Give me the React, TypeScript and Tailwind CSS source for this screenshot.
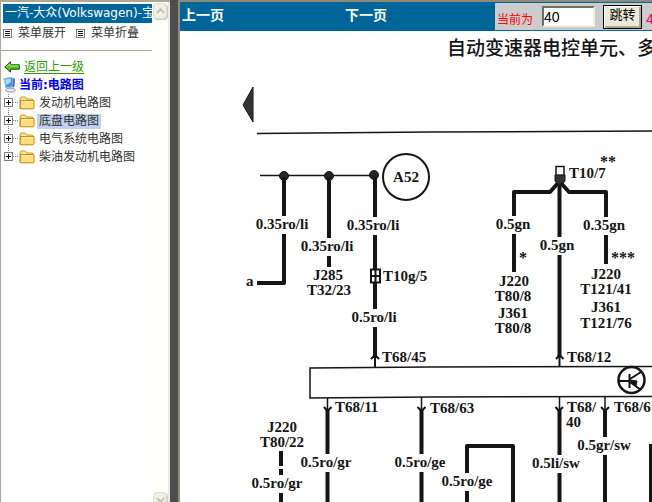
import { useState } from "react";

const UI_FONT = "font-['DejaVu_Sans','Noto_Sans_CJK_SC',sans-serif]";
const CJK_FONT = "font-['Liberation_Sans','Noto_Sans_CJK_SC',sans-serif]";

const FOLDERS = ["发动机电路图", "底盘电路图", "电气系统电路图", "柴油发动机电路图"];

interface WireLabel {
  x: number;
  y: number;
  text: string;
  width: number;
}

// labels that sit on a wire and interrupt it
const WIRE_LABELS: WireLabel[] = [
  { x: 282, y: 229, text: "0.35ro/li", width: 55 },
  { x: 327, y: 251, text: "0.35ro/li", width: 55 },
  { x: 373, y: 230, text: "0.35ro/li", width: 55 },
  { x: 374, y: 322, text: "0.5ro/li", width: 49 },
  { x: 513, y: 229, text: "0.5gn", width: 36 },
  { x: 557, y: 250, text: "0.5gn", width: 36 },
  { x: 604, y: 230, text: "0.35gn", width: 44 },
  { x: 326, y: 467, text: "0.5ro/gr", width: 54 },
  { x: 277, y: 488, text: "0.5ro/gr", width: 54 },
  { x: 420, y: 467, text: "0.5ro/ge", width: 54 },
  { x: 467, y: 486, text: "0.5ro/ge", width: 54 },
  { x: 556, y: 468, text: "0.5li/sw", width: 50 },
  { x: 604, y: 450, text: "0.5gr/sw", width: 56 },
];

const CENTERED_LABELS = [
  { x: 406, y: 182, text: "A52" },
  { x: 328, y: 280, text: "J285" },
  { x: 329, y: 295, text: "T32/23" },
  { x: 514, y: 286, text: "J220" },
  { x: 513, y: 301, text: "T80/8" },
  { x: 513, y: 318, text: "J361" },
  { x: 513, y: 333, text: "T80/8" },
  { x: 606, y: 279, text: "J220" },
  { x: 606, y: 294, text: "T121/41" },
  { x: 606, y: 312, text: "J361" },
  { x: 606, y: 328, text: "T121/76" },
  { x: 282, y: 432, text: "J220" },
  { x: 282, y: 447, text: "T80/22" },
];

const PIN_LABELS = [
  { x: 246, y: 286, text: "a" },
  { x: 383, y: 281, text: "T10g/5" },
  { x: 382, y: 362, text: "T68/45" },
  { x: 569, y: 178, text: "T10/7" },
  { x: 567, y: 362, text: "T68/12" },
  { x: 335, y: 412, text: "T68/11" },
  { x: 430, y: 413, text: "T68/63" },
  { x: 567, y: 412, text: "T68/" },
  { x: 566, y: 427, text: "40" },
  { x: 614, y: 412, text: "T68/6" },
];

function MenuGlyph() {
  return (
    <svg className="size-[9px] shrink-0" viewBox="0 0 9 9" shapeRendering="crispEdges">
      <path d="M.5 .5h8v8h-8z" fill="#fff" stroke="#777" />
      <path d="M2 2.5h5M2 4.5h5M2 6.5h5" stroke="#111" />
    </svg>
  );
}

function BackIcon() {
  return (
    <svg className="h-3 w-4 shrink-0" viewBox="0 0 16 12">
      <path d="M.8 6 6.5 .8v3h8.800v4.400H6.500v3z" fill="#55c820" stroke="#17540d" />
      <path d="M3 5.700 6 3v2h8.500" fill="none" stroke="#b4f064" />
    </svg>
  );
}

function ComputerIcon() {
  return (
    <svg className="h-4 w-3.5 shrink-0" viewBox="0 0 14 16">
      <path d="M.8 1.500 8.500 .5l1.500 1L9.800 9.500 3 11z" fill="#3f97e8" stroke="#9dbce4" />
      <path d="M2 2.500 8 1.800 7.500 5.500 3 8z" fill="#a8e2ff" />
      <path d="M10 1 12 2 11.500 9.500 9.500 11z" fill="#4a6cb4" />
      <path d="M6 10.500h3.500v2H6z" fill="#98a3c2" />
      <ellipse cx="7.500" cy="13.200" rx="5" ry="2" fill="#e4e6f0" stroke="#9a9fbd" />
    </svg>
  );
}

function TreeToggle({ last }: { last: boolean }) {
  return (
    <svg className="h-[18px] w-4 shrink-0" viewBox="0 0 16 18" shapeRendering="crispEdges">
      <path d={last ? "M5.500 0v9" : "M5.500 0v18"} stroke="#808080" strokeDasharray="1 1" />
      <path d="M10 8.500h6" stroke="#808080" strokeDasharray="1 1" />
      <path d="M1.500 4.500h8v8h-8z" fill="#fff" stroke="#808080" />
      <path d="M3 8.500h5M5.500 6v5" stroke="#000" />
    </svg>
  );
}

function FolderIcon() {
  return (
    <svg className="h-3.5 w-4 shrink-0" viewBox="0 0 16 14">
      <path d="M1 3 2 1h4.500l1.500 2h5.500v9.500H1z" fill="#ffe48a" stroke="#d09a20" />
      <path d="M1.500 4.500h13.500v7.500q0 .8-.8 .8H2q-.8 0-.8-.8z" fill="#ffdf7c" stroke="#c78d18" />
      <path d="M2.500 5.800h11.500" stroke="#fff6bd" />
    </svg>
  );
}

function ScrollButton({ direction }: { direction: "up" | "down" }) {
  return (
    <button
      type="button"
      aria-label={direction === "up" ? "向上滚动" : "向下滚动"}
      className="flex h-4 w-full items-center justify-center rounded-sm border border-[#dedcd0] bg-[#f0efe8] shadow-[1px_1px_0_#cfcdc0]"
    >
      <svg className="h-[6px] w-[9px]" viewBox="0 0 9 6">
        <path
          d={direction === "up" ? "M.8 5 4.500 1.300 8.200 5" : "M.8 1 4.500 4.700 8.200 1"}
          fill="none"
          stroke="#c4c3ba"
          strokeWidth="2"
        />
      </svg>
    </button>
  );
}

function Sidebar() {
  const [selected, setSelected] = useState("底盘电路图");

  return (
    <aside className="flex w-[170px] shrink-0 border-l border-t-2 border-[#aca899] bg-white">
      <div className={`min-w-0 flex-1 overflow-hidden whitespace-nowrap text-xs text-[#333] ${UI_FONT}`}>
        <h1 className="ml-0.5 mt-0.5 h-[19px] overflow-hidden bg-[#006699] pl-0.5 leading-[18px] text-white">
          一汽-大众(Volkswagen)-宝
        </h1>
        <div className="flex h-7 gap-2.5 border-b border-[#aca899] pl-0.5">
          <button type="button" className="flex h-5 items-center gap-1.5">
            <MenuGlyph />
            菜单展开
          </button>
          <button type="button" className="flex h-5 items-center gap-1.5">
            <MenuGlyph />
            菜单折叠
          </button>
        </div>
        <nav className="pl-0.5 pt-1.5">
          <a href="#up" className="ml-px flex h-[19px] items-center gap-1 text-[#339900]">
            <BackIcon />
            <span className="underline underline-offset-2">返回上一级</span>
          </a>
          <p className="flex h-[18px] items-center gap-0.5 font-bold text-[#0000ff]">
            <ComputerIcon />
            当前:电路图
          </p>
          <ul>
            {FOLDERS.map((name, index) => (
              <li key={name} className="flex h-[18px] items-center">
                <TreeToggle last={index === FOLDERS.length - 1} />
                <FolderIcon />
                <button
                  type="button"
                  onClick={() => setSelected(name)}
                  className={`ml-0.5 h-[15px] px-0.5 leading-[15px] ${selected === name ? "bg-[#c0d2ec]" : ""}`}
                >
                  {name}
                </button>
              </li>
            ))}
          </ul>
        </nav>
      </div>
      <div className="flex w-[18px] flex-col justify-between border-r-2 border-[#edebdf] bg-[#fefefa] px-px pt-px">
        <ScrollButton direction="up" />
        <div className="-mb-1.5">
          <ScrollButton direction="down" />
        </div>
      </div>
    </aside>
  );
}

function Toolbar() {
  const [page, setPage] = useState("40");

  return (
    <header className={`flex h-[29px] shrink-0 bg-[#006699] ${CJK_FONT}`}>
      <a href="#prev" className="w-[163px] shrink-0 pl-0.5 text-sm font-bold leading-[26px] text-white">
        上一页
      </a>
      <a href="#next" className="w-[152px] shrink-0 pl-0.5 text-sm font-bold leading-[26px] text-white">
        下一页
      </a>
      <form
        className="my-px flex flex-1 items-center overflow-hidden whitespace-nowrap bg-[#cccccc] pl-0.5 text-xs text-[#ff0000]"
        onSubmit={(event) => event.preventDefault()}
      >
        <label htmlFor="page" className="w-[45px] shrink-0 pt-1.5">
          当前为
        </label>
        <input
          id="page"
          type="text"
          value={page}
          onChange={(event) => setPage(event.target.value)}
          className="h-[21px] w-[53px] shrink-0 border-2 border-b-[#f1efe2] border-l-[#716f64] border-r-[#f1efe2] border-t-[#716f64] bg-white text-sm text-black"
        />
        <button
          type="submit"
          className="ml-2 h-6 w-[39px] shrink-0 border border-black bg-[#ece9d8] pb-1 text-[13px] leading-4 text-black shadow-[inset_1px_1px_0_#fff,inset_-2px_-2px_0_#aca899]"
        >
          跳转
        </button>
        <span className="ml-1 pt-1 text-sm text-[#ff0066]">4</span>
      </form>
    </header>
  );
}

function WiringDiagram() {
  return (
    <svg
      role="img"
      aria-label="自动变速器电控单元电路图"
      className="h-[471px] w-[472px] shrink-0"
      viewBox="180 31 472 471"
      fill="none"
      stroke="#151515"
    >
      <text
        x="447"
        y="55"
        fontSize="19"
        fontWeight="500"
        fill="#151515"
        stroke="none"
        className={CJK_FONT}
      >
        自动变速器电控单元、多
      </text>
      <path d="M243 105 253 87v35z" fill="#333" />
      <path d="M257 133.500 430 132 652 131" strokeWidth="1.500" />

      {/* A52 branch */}
      <path d="M260 175.500h114" strokeWidth="1.500" />
      <g fill="#252525">
        <circle cx="284" cy="176" r="4.500" />
        <circle cx="329" cy="176" r="4.500" />
        <circle cx="374" cy="175" r="4.500" />
      </g>
      <circle cx="406" cy="177" r="23" strokeWidth="2" />
      <g strokeWidth="4">
        <path d="M284 177v106h-27" strokeLinejoin="round" />
        <path d="M329 177v90" />
        <path d="M375 177v92M375 283v75" />
      </g>
      <path d="M371 269.500h9v13h-9zM375.500 269v14M371 276h9" strokeWidth="2" />
      <path d="M375 355v12M371 359l4-4 4 4" strokeWidth="2" />

      {/* T10/7 branch */}
      <path d="M556 166.500h8v9h-8z" strokeWidth="1.500" />
      <path d="M555 175h10v6l-5 6-5-6z" fill="#333" />
      <g strokeWidth="4">
        <path d="m558 183-8 9h-36v80" strokeLinejoin="round" />
        <path d="m561 183 8 9h37v72" strokeLinejoin="round" />
        <path d="M559.500 185v171" />
      </g>
      <path d="M559.500 355v12M556 359l3.500-4 4 4" strokeWidth="2" />

      {/* control unit */}
      <path d="M652 366.500 430 367 310 368v30l120-1 222-.5" strokeWidth="1.500" />
      <circle cx="631.500" cy="380" r="13" strokeWidth="2.500" />
      <path d="M618 381h12M629.500 374v14M630 379l11-7M630 382l11 8" strokeWidth="2" />
      <path d="m630 380 7 1-1 5z" fill="#151515" />

      {/* lower pins */}
      <path d="M327.500 398v12M421.500 397v12M559.500 397v12M605 397v12" strokeWidth="1.500" />
      <path
        d="m324 407 3.500 4 4-4m86 0 4 4 4-4m130 0 3.500 4 4-4m38 0 4 4 4-4"
        strokeWidth="2"
      />
      <g strokeWidth="4">
        <path d="M327.500 410v92M421.500 410v92M559.500 410v92M605 410v92" />
        <path d="M281 451v15m0 3v6m0 3v24" />
        <path d="M467 502v-56h46v56" strokeLinejoin="round" />
        <path d="M651 502v-56h20" />
      </g>

      <g
        fill="#151515"
        stroke="none"
        fontSize="15"
        fontWeight="bold"
        className="font-['Liberation_Serif',serif]"
      >
        {WIRE_LABELS.map((label) => (
          <g key={`${label.x}-${label.y}`} textAnchor="middle">
            <rect x={label.x - label.width / 2} y={label.y - 13} width={label.width} height="18" fill="#fff" />
            <text x={label.x} y={label.y}>
              {label.text}
            </text>
          </g>
        ))}
        {CENTERED_LABELS.map((label) => (
          <text key={`${label.x}-${label.y}`} x={label.x} y={label.y} textAnchor="middle">
            {label.text}
          </text>
        ))}
        {PIN_LABELS.map((label) => (
          <text key={`${label.x}-${label.y}`} x={label.x} y={label.y}>
            {label.text}
          </text>
        ))}
        <g fontSize="16">
          <text x="600" y="167">**</text>
          <text x="519" y="263">*</text>
          <text x="611" y="263">***</text>
        </g>
      </g>
    </svg>
  );
}

export default function App() {
  return (
    <div className="flex h-screen overflow-hidden bg-[#4d4d4d]">
      <Sidebar />
      <main className="ml-2 flex min-w-0 flex-1 flex-col overflow-hidden border-l-2 border-t-2 border-[#8f8c7e] bg-white">
        <Toolbar />
        <WiringDiagram />
      </main>
    </div>
  );
}
